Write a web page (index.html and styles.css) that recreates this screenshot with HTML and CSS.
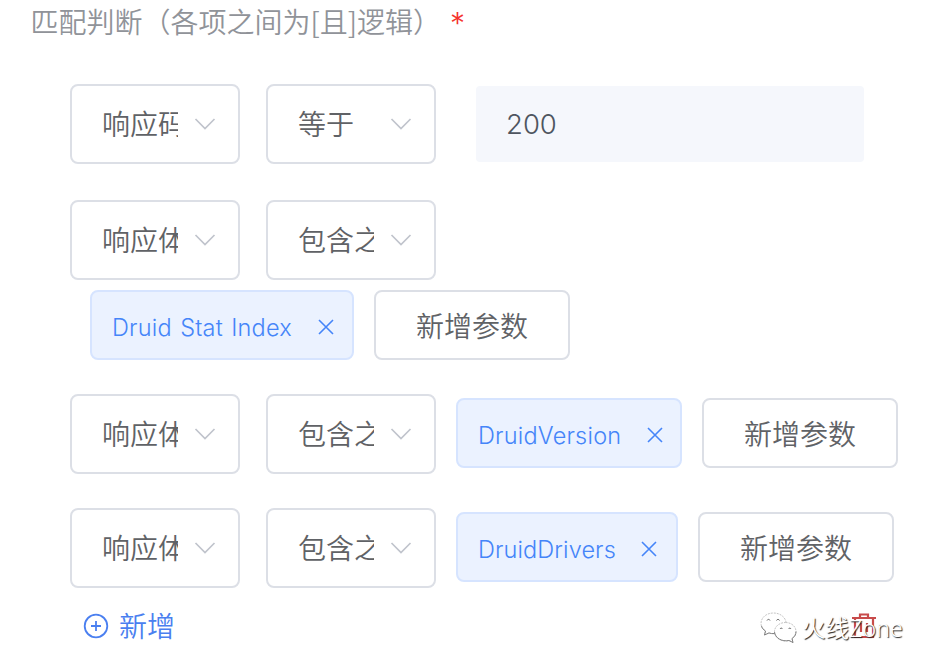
FILE: index.html
```html
<!DOCTYPE html>
<html lang="zh-CN">
<head>
<meta charset="utf-8">
<title>匹配判断</title>
<link rel="stylesheet" href="styles.css">
</head>
<body>
<svg class="symbols" aria-hidden="true">
  <symbol id="chevron" viewBox="0 0 22 14"><path d="M1.500 2 11 11.500 20.500 2"/></symbol>
  <symbol id="cross" viewBox="0 0 16 16"><path d="m1 1 14 14M15 1 1 15"/></symbol>
</svg>
<main class="form">
  <h1 class="title"><span>匹配判断（各项之间为[且]逻辑）</span><span class="required">*</span></h1>

  <div class="row row-code">
    <div class="select"><span class="value">响应码</span><svg class="chevron"><use href="#chevron"/></svg></div>
    <div class="select"><span class="value">等于</span><svg class="chevron"><use href="#chevron"/></svg></div>
    <div class="input">200</div>
  </div>

  <div class="row row-body">
    <div class="select"><span class="value">响应体</span><svg class="chevron"><use href="#chevron"/></svg></div>
    <div class="select"><span class="value">包含之一</span><svg class="chevron"><use href="#chevron"/></svg></div>
  </div>
  <div class="params">
    <div class="tag tag-index"><span class="tag-text">Druid Stat Index</span><svg class="cross"><use href="#cross"/></svg></div>
    <button class="button">新增参数</button>
  </div>

  <div class="row row-version">
    <div class="select"><span class="value">响应体</span><svg class="chevron"><use href="#chevron"/></svg></div>
    <div class="select"><span class="value">包含之一</span><svg class="chevron"><use href="#chevron"/></svg></div>
    <div class="tag tag-version"><span class="tag-text">DruidVersion</span><svg class="cross"><use href="#cross"/></svg></div>
    <button class="button">新增参数</button>
  </div>

  <div class="row row-drivers">
    <div class="select"><span class="value">响应体</span><svg class="chevron"><use href="#chevron"/></svg></div>
    <div class="select"><span class="value">包含之一</span><svg class="chevron"><use href="#chevron"/></svg></div>
    <div class="tag tag-drivers"><span class="tag-text">DruidDrivers</span><svg class="cross"><use href="#cross"/></svg></div>
    <button class="button">新增参数</button>
  </div>

  <div class="footer">
    <a class="add"><svg class="plus" viewBox="0 0 26 26"><circle cx="13" cy="13" r="11.300"/><path d="M8 13h10M13 8v10"/></svg><span class="add-text">新增</span></a>
    <svg class="trash" viewBox="0 0 24 26"><path d="M0 5h24M8 5V1.500h8V5M3 5v19h18V5M9 10v9M15 10v9"/></svg>
    <div class="watermark">
      <svg class="wechat" viewBox="0 0 38 34">
        <path class="bubble" d="M14.500 21.500c-2 .3-4 0-5.500-.6L4.500 23l1-4C2.500 17 1 14.500 1 11.500 1 5.500 6.500 1 13.500 1 19.500 1 25 4.500 26 10"/>
        <path class="bubble" d="M25.500 10.500c6 0 10.500 4 10.500 9 0 3-1.500 5.500-4 7l1 4-4-2c-7.500 2-14.500-2.500-14.500-9 0-5 5-9 11-9Z"/>
        <path class="shade" d="M1.500 14c.6 2.200 2 3.800 4 5l-1 4 4.500-2.100c1.500.6 3.500.9 5.500.6M14.500 20c.6 6 7.500 10 14.500 8.500l4 2-1-4c2.500-1.500 4-4 4-7"/>
        <path class="eyes" d="M7 8.500c.6-1.500 2.500-1.500 3 0M16.500 8.500c.6-1.500 2.500-1.500 3 0M20 17c.6-1.200 2-1.200 2.500 0M28.500 17c.6-1.200 2-1.200 2.500 0"/>
      </svg>
      <span>火线<span class="brand">Zone</span></span>
    </div>
  </div>
</main>
</body>
</html>
```
FILE: styles.css
```css
* { box-sizing: border-box; }
body {
  margin: 0;
  background: #fff;
  color: #606266;
  font: 350 28px/40px Inter, "Noto Sans CJK SC", sans-serif;
}
svg { fill: none; stroke: currentColor; flex: none; }
.symbols { position: absolute; width: 0; height: 0; }
.form { height: 670px; overflow: hidden; }
.title {
  display: flex;
  margin: 0;
  padding: 1px 0 0 30.500px;
  height: 44px;
  color: #909399;
  font: 350 28px/40px "Noto Sans CJK SC", sans-serif;
}
.required {
  margin-left: 9px;
  color: #f5322d;
  font: 300 30px/44px Inter, sans-serif;
}
.row { display: flex; align-items: center; height: 80px; padding-left: 70px; }
.row-code { margin-top: 40px; }
.row-body { margin-top: 36px; }
.row-version { margin-top: 34px; }
.row-drivers { margin-top: 34px; }
.select {
  display: flex;
  align-items: center;
  width: 170px;
  height: 80px;
  padding-left: 30px;
  border: 2px solid #dcdfe6;
  border-radius: 8px;
}
.select + .select { margin-left: 26px; }
.value { width: 76px; padding-top: 2px; overflow: hidden; white-space: nowrap; }
.chevron { width: 22px; height: 14px; margin-left: 16px; color: #c0c4cc; stroke-width: 1.7; }
.input {
  width: 388px;
  height: 76px;
  margin-left: 40px;
  padding-left: 30px;
  border-radius: 4px;
  background: #f5f7fc;
  color: #4e5560;
  font-size: 27.500px;
  line-height: 77px;
}
.params { display: flex; padding: 10px 0 0 90px; }
.tag {
  display: flex;
  align-items: center;
  justify-content: space-between;
  height: 70px;
  padding: 6px 18px 0 20px;
  border: 2px solid #d6e4ff;
  border-radius: 8px;
  background: #ebf2ff;
  color: #4585f9;
  font-size: 23.500px;
  letter-spacing: .2px;
  white-space: nowrap;
}
.row .tag, .row .button { margin-bottom: 2px; }
.select + .tag { margin-left: 20px; }
.tag-index { width: 264px; word-spacing: 1.500px; }
.tag-version { width: 226px; padding-right: 17px; }
.tag-drivers { width: 222px; padding-right: 19px; letter-spacing: .1px; }
.cross { width: 16px; height: 16px; margin-top: -2px; stroke-width: 1.6; }
.button {
  width: 196px;
  height: 70px;
  margin-left: 20px;
  padding: 3px 0 0;
  border: 2px solid #dcdfe6;
  border-radius: 8px;
  background: #fff;
  color: #606266;
  font: inherit;
}
.footer {
  position: relative;
  display: flex;
  align-items: center;
  justify-content: space-between;
  height: 40px;
  margin-top: 18px;
  padding: 0 58px 0 83px;
}
.add { display: flex; align-items: center; color: #4a7ff0; }
.add-text { padding-top: 2px; }
.plus { width: 26px; height: 26px; margin-right: 10px; stroke-width: 1.8; }
.trash { width: 24px; height: 26px; color: #c84b4b; stroke-width: 2.2; }
.watermark {
  position: absolute;
  left: 760px;
  top: 2px;
  display: flex;
  align-items: center;
  gap: 4px;
  color: #fff;
  font-size: 23.500px;
  text-shadow: 1px 1px 1px #222;
  white-space: nowrap;
}
.brand { font-family: "Noto Sans", sans-serif; font-size: 23px; letter-spacing: .2px; }
.wechat { width: 38px; height: 34px; }
.bubble { fill: #fff; stroke: #aaa; stroke-width: .7; stroke-dasharray: 2 1; }
.shade { stroke: #777; stroke-width: .9; }
.eyes { stroke: #666; stroke-width: 1; }
```
